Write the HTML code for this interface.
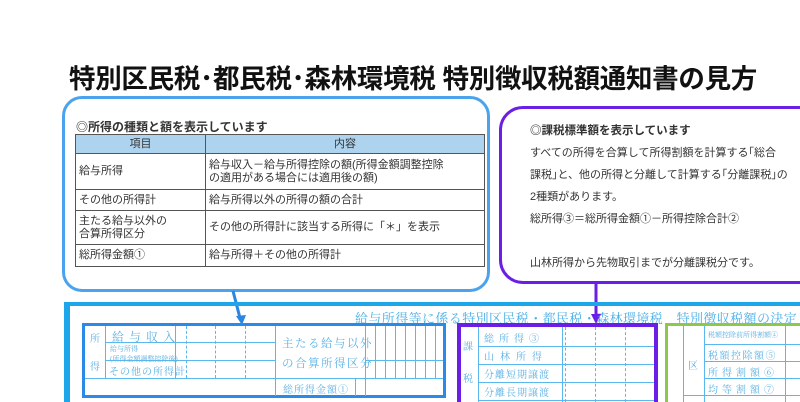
<!DOCTYPE html>
<html><head><meta charset="utf-8"><style>
*{margin:0;padding:0;box-sizing:border-box}
html,body{width:800px;height:402px;overflow:hidden;background:#fff}
#w{position:relative;width:800px;height:402px;overflow:hidden;font-family:"Liberation Sans","Noto Sans CJK JP",sans-serif;color:#222}
.a{position:absolute}
h1{position:absolute;left:69px;top:57px;font-size:26.5px;font-weight:bold;white-space:nowrap;color:#111;letter-spacing:-0.3px}
.lb{left:62px;top:96px;width:428px;height:196px;border:3px solid #4aa3ec;border-radius:20px}
.rb{left:499px;top:106px;width:330px;height:178px;border:3px solid #6a1ee6;border-radius:24px}
table{border-collapse:collapse;font-size:11px;color:#333}
td{border:1px solid #555;padding:0 3px;line-height:13px}
.fl{color:#49aee6;font-family:"Liberation Serif","Noto Serif CJK SC",serif}
.ln{position:absolute;background:#5ab8ee}
.dv{position:absolute;border-left:1px dashed #5ab8ee}
.ft{position:absolute;font-size:10px;color:#5ab0e4;font-family:"Liberation Serif","Noto Serif CJK SC",serif;white-space:nowrap;letter-spacing:2px}
</style></head><body><div id="w">
<h1>特別区民税･都民税･森林環境税 特別徴収税額通知書の見方</h1>
<div class="a lb"></div>
<div class="a" style="left:76px;top:118px;font-size:12px;font-weight:bold;color:#333">◎所得の種類と額を表示しています</div>
<table class="a" style="left:75px;top:134px;width:410px">
<tr style="background:#aed3ef;height:19px"><td style="width:130px;text-align:center">項目</td><td style="text-align:center">内容</td></tr>
<tr style="height:36px"><td>給与所得</td><td>給与収入－給与所得控除の額(所得金額調整控除<br>の適用がある場合には適用後の額)</td></tr>
<tr style="height:21px"><td>その他の所得計</td><td>給与所得以外の所得の額の合計</td></tr>
<tr style="height:34px"><td>主たる給与以外の<br>合算所得区分</td><td>その他の所得計に該当する所得に「＊」を表示</td></tr>
<tr style="height:22px"><td>総所得金額①</td><td>給与所得＋その他の所得計</td></tr>
</table>
<div class="a rb"></div>
<div class="a" style="left:530px;top:120px;font-size:11px;line-height:22px;color:#333;white-space:nowrap">
<b style="font-size:11.5px">◎課税標準額を表示しています</b><br>すべての所得を合算して所得割額を計算する｢総合<br>課税｣と、他の所得と分離して計算する｢分離課税｣の<br>2種類があります。<br>総所得③＝総所得金額①－所得控除合計②<br><br>山林所得から先物取引までが分離課税分です。</div>
<svg class="a" style="left:0;top:0" width="800" height="402">
<line x1="233" y1="291" x2="240" y2="318" stroke="#2a86e0" stroke-width="3"/>
<polygon points="236,316 246,315 242,325" fill="#2a86e0"/>
<line x1="596" y1="284" x2="596" y2="316" stroke="#6a1ee6" stroke-width="3"/>
<polygon points="591,314 601,314 596,324" fill="#6a1ee6"/>
</svg>
<div class="ln" style="left:64px;top:302px;width:736px;height:4px;background:#1ea6ea"></div>
<div class="ln" style="left:64px;top:302px;width:6px;height:100px;background:#1ea6ea"></div>
<div class="fl a" style="left:355px;top:308px;font-size:13px;letter-spacing:0.4px;white-space:nowrap">給与所得等に係る特別区民税・都民税・森林環境税　特別徴収税額の決定</div>
<div class="a" style="left:82px;top:323px;width:364px;height:75px;border:3px solid #2a8ae8"></div>
<div class="ln" style="left:105px;top:326px;width:1px;height:52px"></div>
<div class="ln" style="left:175px;top:326px;width:1px;height:52px"></div>
<div class="ln" style="left:275px;top:326px;width:1px;height:70px"></div>
<div class="ln" style="left:365px;top:326px;width:1px;height:70px"></div>
<div class="ln" style="left:355px;top:378px;width:1px;height:18px"></div>
<div class="ln" style="left:105px;top:342px;width:170px;height:1px"></div>
<div class="ln" style="left:105px;top:360px;width:170px;height:1px"></div>
<div class="ln" style="left:85px;top:378px;width:358px;height:1px"></div>
<div class="ln" style="left:365px;top:360px;width:78px;height:1px"></div>
<div class="dv" style="left:186px;top:326px;height:52px"></div>
<div class="dv" style="left:215px;top:326px;height:52px"></div>
<div class="dv" style="left:245px;top:326px;height:52px"></div>
<div class="ln" style="left:375px;top:326px;width:1px;height:52px"></div>
<div class="ln" style="left:385px;top:326px;width:1px;height:52px"></div>
<div class="ln" style="left:395px;top:326px;width:1px;height:52px"></div>
<div class="ln" style="left:405px;top:326px;width:1px;height:52px"></div>
<div class="ln" style="left:415px;top:326px;width:1px;height:52px"></div>
<div class="ln" style="left:425px;top:326px;width:1px;height:52px"></div>
<div class="ln" style="left:435px;top:326px;width:1px;height:52px"></div>
<div class="ft" style="left:90px;top:330px">所</div>
<div class="ft" style="left:90px;top:358px">得</div>
<div class="ft" style="left:112px;top:328px;font-size:12px;letter-spacing:5px">給与収入</div>
<div class="ft" style="left:110px;top:344px;font-size:7px;letter-spacing:0">給与所得<br>(所得金額調整控除後)</div>
<div class="ft" style="left:109px;top:363px;letter-spacing:1px">その他の所得計</div>
<div class="ft" style="left:282px;top:334px;font-size:11.5px;letter-spacing:1.5px;line-height:20px">主たる給与以外<br>の合算所得区分</div>
<div class="ft" style="left:283px;top:381px;letter-spacing:1px">総所得金額①</div>
<div class="a" style="left:457px;top:323px;width:201px;height:90px;border:4px solid #6a1ee6"></div>
<div class="ln" style="left:478px;top:327px;width:1px;height:75px"></div>
<div class="ln" style="left:562px;top:327px;width:1px;height:75px"></div>
<div class="ln" style="left:478px;top:346px;width:176px;height:1px"></div>
<div class="ln" style="left:478px;top:364px;width:176px;height:1px"></div>
<div class="ln" style="left:478px;top:382px;width:176px;height:1px"></div>
<div class="ln" style="left:478px;top:400px;width:176px;height:1px"></div>
<div class="dv" style="left:565px;top:327px;height:75px"></div>
<div class="dv" style="left:595px;top:327px;height:75px"></div>
<div class="dv" style="left:625px;top:327px;height:75px"></div>
<div class="ft" style="left:463px;top:338px">課</div>
<div class="ft" style="left:463px;top:370px">税</div>
<div class="ft" style="left:484px;top:330px;letter-spacing:5px">総所得③</div>
<div class="ft" style="left:484px;top:348px;letter-spacing:6px">山林所得</div>
<div class="ft" style="left:484px;top:366px;letter-spacing:1px">分離短期譲渡</div>
<div class="ft" style="left:484px;top:384px;letter-spacing:1px">分離長期譲渡</div>
<div class="a" style="left:665px;top:323px;width:150px;height:90px;border:3px solid #8cc84a"></div>
<div class="ln" style="left:683px;top:326px;width:1px;height:76px"></div>
<div class="ln" style="left:704px;top:326px;width:1px;height:76px"></div>
<div class="ln" style="left:785px;top:326px;width:1px;height:76px"></div>
<div class="ln" style="left:704px;top:344px;width:96px;height:1px"></div>
<div class="ln" style="left:704px;top:361px;width:96px;height:1px"></div>
<div class="ln" style="left:704px;top:378px;width:96px;height:1px"></div>
<div class="ln" style="left:683px;top:395px;width:117px;height:1px"></div>
<div class="ft" style="left:688px;top:357px">区</div>
<div class="ft" style="left:708px;top:330px;font-size:7px;letter-spacing:0">税額控除前所得割額④</div>
<div class="ft" style="left:708px;top:347px;letter-spacing:1.5px">税額控除額⑤</div>
<div class="ft" style="left:708px;top:364px;letter-spacing:4px">所得割額⑥</div>
<div class="ft" style="left:708px;top:381px;letter-spacing:4px">均等割額⑦</div>
</div></body></html>
